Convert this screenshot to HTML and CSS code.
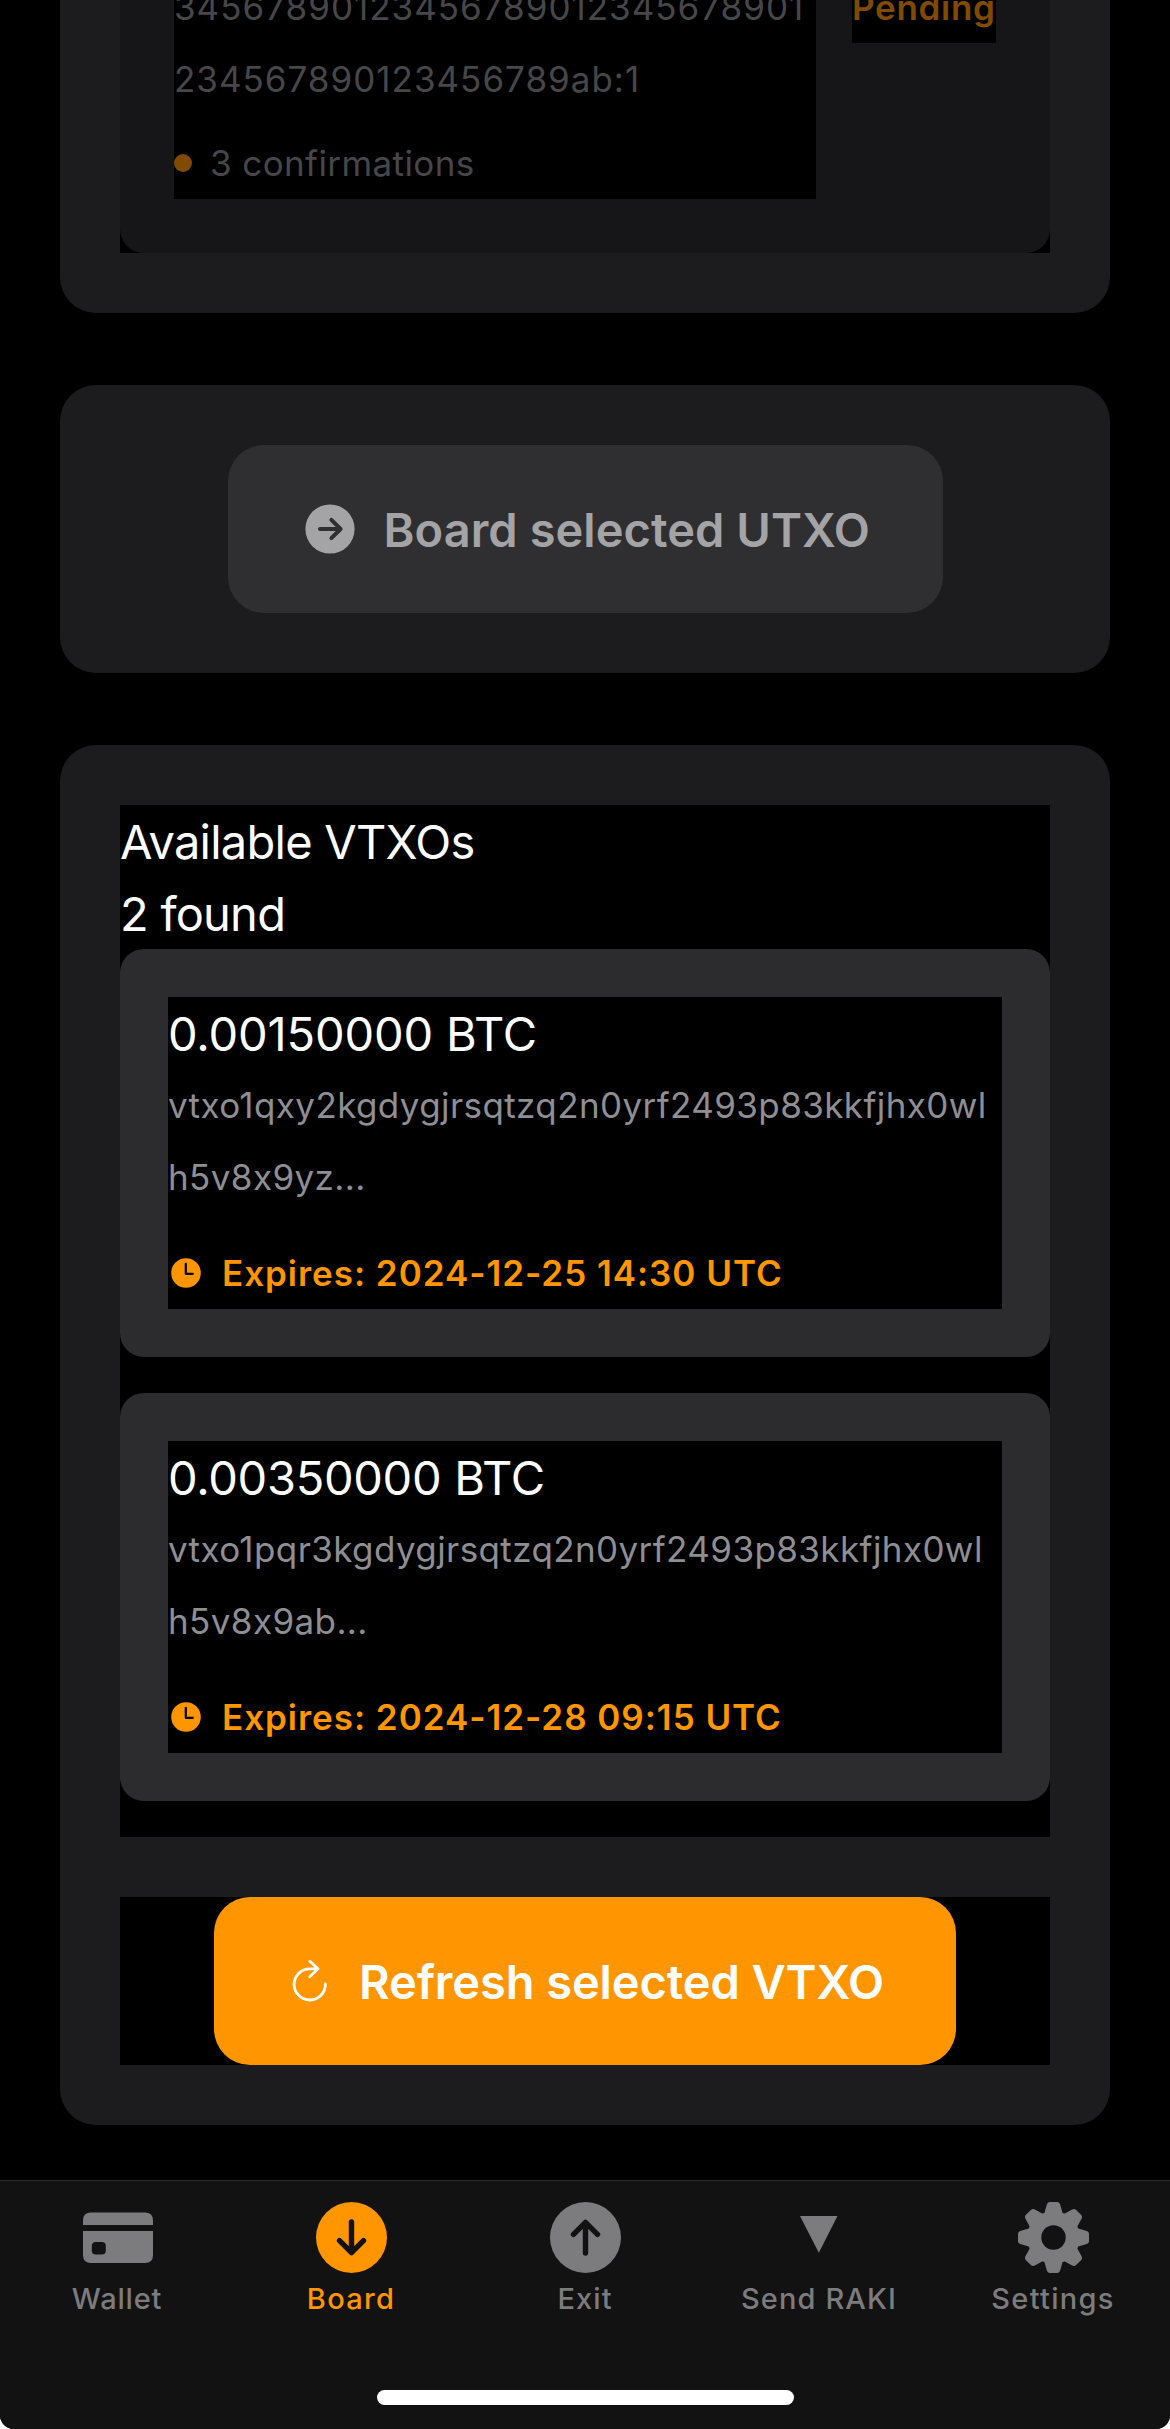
FILE: index.html
```html
<!DOCTYPE html>
<html lang="en">
<head>
<meta charset="utf-8">
<title>Board</title>
<link rel="stylesheet" href="styles.css">
</head>
<body>
<div class="app">
  <main class="content">
    <section class="card card-clipped">
      <div class="panel">
        <div class="utxo">
          <div class="utxo-info">
            <div class="hash digits">34567890123456789012345678901</div>
            <div class="hash digits">234567890123456789ab:1</div>
            <div class="confirm"><span class="dot"></span><span>3 confirmations</span></div>
          </div>
          <div class="status">Pending</div>
        </div>
      </div>
    </section>

    <section class="card card-action">
      <button class="button button-disabled">
        <svg class="button-icon" width="60" height="60" viewBox="0 0 60 60"><circle cx="30" cy="30" r="24.6" fill="#a4a4a6"/><path d="M20 30H40M31.4 20.8 40.6 30 31.4 39.2" fill="none" stroke="#2f2f31" stroke-width="4" stroke-linecap="round" stroke-linejoin="round"/></svg>
        <span class="button-label">Board selected UTXO</span>
      </button>
    </section>

    <section class="card card-vtxo">
      <div class="panel vtxo-list">
        <div class="heading">Available VTXOs</div>
        <div class="heading">2 found</div>
        <article class="vtxo">
          <div class="vtxo-body">
            <div class="amount">0.00150000 BTC</div>
            <div class="hash">vtxo1qxy2kgdygjrsqtzq2n0yrf2493p83kkfjhx0wl</div>
            <div class="hash">h5v8x9yz...</div>
            <div class="expires">
              <svg width="36" height="36" viewBox="0 0 36 36"><circle cx="18" cy="18" r="14.8" fill="#ff9500"/><path d="M17.8 8.8V18.8H24.8" fill="none" stroke="#000" stroke-width="2.2" stroke-linecap="round" stroke-linejoin="round"/></svg>
              <span>Expires: 2024-12-25 14:30 UTC</span>
            </div>
          </div>
        </article>
        <article class="vtxo">
          <div class="vtxo-body">
            <div class="amount amount-tight">0.00350000 BTC</div>
            <div class="hash">vtxo1pqr3kgdygjrsqtzq2n0yrf2493p83kkfjhx0wl</div>
            <div class="hash">h5v8x9ab...</div>
            <div class="expires">
              <svg width="36" height="36" viewBox="0 0 36 36"><circle cx="18" cy="18" r="14.8" fill="#ff9500"/><path d="M17.8 8.8V18.8H24.8" fill="none" stroke="#000" stroke-width="2.2" stroke-linecap="round" stroke-linejoin="round"/></svg>
              <span>Expires: 2024-12-28 09:15 UTC</span>
            </div>
          </div>
        </article>
      </div>
      <div class="panel refresh-row">
        <button class="button button-refresh">
          <svg class="button-icon" width="49" height="60" viewBox="0 0 49 60"><path d="M39.3 33A15.600 15.600 0 1 1 23.700 17.800H32M23.800 10.300 32 17.800 23.800 25.700" fill="none" stroke="#fff" stroke-width="2.800" stroke-linecap="round" stroke-linejoin="round"/></svg>
          <span class="button-label">Refresh selected VTXO</span>
        </button>
      </div>
    </section>
  </main>

  <nav class="tabbar">
    <div class="tabs">
      <a class="tab tab-wallet">
        <svg width="72" height="72" viewBox="0 0 72 72"><path d="M2 23V18.500Q2 10.500 10 10.500H64Q72 10.500 72 18.500V23ZM2 29H72V53Q72 61 64 61H10Q2 61 2 53Z" fill="#7c7c7e"/><rect x="10.800" y="40" width="14" height="12.500" rx="4" fill="#121212"/></svg>
        <span>Wallet</span>
      </a>
      <a class="tab tab-active">
        <svg width="72" height="72" viewBox="0 0 72 72"><circle cx="36.500" cy="35.500" r="35.500" fill="#ff9500"/><path d="M36.500 20V50.500M24.500 38.700 36.500 50.700 48.500 38.700" fill="none" stroke="#121212" stroke-width="5.400" stroke-linecap="round" stroke-linejoin="round"/></svg>
        <span>Board</span>
      </a>
      <a class="tab">
        <svg width="72" height="72" viewBox="0 0 72 72"><circle cx="36.500" cy="35.500" r="35.500" fill="#7c7c7e"/><path d="M36.500 51V20.500M24.500 32.300 36.500 20.300 48.500 32.300" fill="none" stroke="#121212" stroke-width="5.400" stroke-linecap="round" stroke-linejoin="round"/></svg>
        <span>Exit</span>
      </a>
      <a class="tab">
        <svg width="72" height="72" viewBox="0 0 72 72"><path d="M17 14H54.500L35.800 50.700Z" fill="#7c7c7e"/></svg>
        <span>Send RAKI</span>
      </a>
      <a class="tab tab-wide">
        <svg width="74" height="72" viewBox="-37 -36 74 72">
          <defs><path id="tooth" d="M-9.500 -23 -6.800 -32.500Q-6 -35.500 -3.500 -35.500H3.500Q6 -35.500 6.800 -32.500L9.500 -23Z"/></defs>
          <g transform="translate(.5 -.5)" fill="#7c7c7e">
            <circle r="26.300"/>
            <use href="#tooth"/><use href="#tooth" transform="rotate(45)"/><use href="#tooth" transform="rotate(90)"/><use href="#tooth" transform="rotate(135)"/><use href="#tooth" transform="rotate(180)"/><use href="#tooth" transform="rotate(225)"/><use href="#tooth" transform="rotate(270)"/><use href="#tooth" transform="rotate(315)"/>
            <circle r="12.200" fill="#121212"/>
          </g>
        </svg>
        <span>Settings</span>
      </a>
    </div>
    <div class="home-indicator"></div>
  </nav>
</div>
</body>
</html>
```
FILE: styles.css
```css
* { box-sizing: border-box; }

body {
  margin: 0;
  background: #fff;
  color: #fff;
  font-family: Inter, "Liberation Sans", sans-serif;
  font-feature-settings: "calt" 0;
  font-size: 47px;
  line-height: 72px;
}

svg { display: block; flex: none; }

.app {
  display: flex;
  flex-direction: column;
  height: 2429px;
  overflow: hidden;
  background: #000;
  border-radius: 0 0 14px 14px;
}

.content {
  display: flex;
  flex-direction: column;
  flex: none;
  gap: 72px;
  height: 2180px;
  padding: 0 60px;
  overflow: hidden;
}

.card {
  flex: none;
  padding: 60px;
  border-radius: 36px;
  background: #1c1c1e;
}

.card-clipped {
  height: 313px;
  padding-top: 0;
  border-radius: 0 0 36px 36px;
}

.panel { background: #000; }

/* UTXO row scrolled partly out of view */
.utxo {
  display: flex;
  align-items: flex-start;
  justify-content: space-between;
  height: 253px;
  padding: 0 54px 54px;
  overflow: hidden;
  border-radius: 0 0 24px 24px;
  background: #161618;
}

.utxo-info {
  width: 642px;
  height: 228px;
  margin-top: -29px;
  background: #000;
  color: #47474a;
}

.confirm {
  display: flex;
  align-items: center;
  gap: 18px;
  margin-top: 12px;
  font-size: 35px;
  letter-spacing: .4px;
}

.dot {
  width: 18px;
  height: 18px;
  border-radius: 50%;
  background: #804b00;
}

.status {
  width: 144px;
  height: 72px;
  margin-top: -29px;
  background: #000;
  color: #804b00;
  font-size: 35px;
  font-weight: 600;
  letter-spacing: .7px;
}

.hash {
  font-size: 35px;
  letter-spacing: .4px;
  white-space: nowrap;
}

.digits { letter-spacing: 1px; }

.card-action {
  display: flex;
  justify-content: center;
  height: 288px;
}

.button {
  display: flex;
  align-items: center;
  gap: 24px;
  height: 168px;
  padding: 0 72px;
  border: 0;
  border-radius: 36px;
  font: inherit;
  font-weight: 600;
  line-height: 72px;
  white-space: nowrap;
}

.button-label { padding-top: 2px; }

.button-disabled {
  width: 715px;
  background: #2f2f31;
  color: #a4a4a6;
  letter-spacing: .05px;
}

.button-refresh {
  width: 742px;
  background: #ff9500;
  color: #fff;
  letter-spacing: -.1px;
}

.vtxo-list { height: 1032px; }

.heading {
  height: 72px;
  padding-top: 1px;
  letter-spacing: -.75px;
}

.vtxo {
  height: 408px;
  margin-bottom: 36px;
  padding: 48px;
  border-radius: 24px;
  background: #2c2c2e;
}

.vtxo-body {
  height: 312px;
  background: #000;
}

.vtxo-body .hash { color: #8e8e93; }

.amount {
  height: 72px;
  padding-top: 1px;
  letter-spacing: -.15px;
}

.amount-tight { letter-spacing: -.3px; }

.expires {
  display: flex;
  align-items: center;
  gap: 18px;
  margin-top: 24px;
  color: #ff9500;
  font-size: 35px;
  font-weight: 600;
  letter-spacing: .97px;
}

.refresh-row {
  display: flex;
  justify-content: center;
  margin-top: 60px;
}

.tabbar {
  display: flex;
  flex-direction: column;
  align-items: center;
  justify-content: space-between;
  flex: 1;
  padding: 21px 0 24px;
  border-top: 1px solid #2b2b2d;
  background: #121212;
}

.tabs {
  display: grid;
  grid-template-columns: repeat(5, 1fr);
  width: 100%;
}

.tab {
  display: flex;
  flex-direction: column;
  align-items: center;
  gap: 7px;
  color: #7c7c7e;
  font-size: 29px;
  font-weight: 450;
  line-height: 36px;
  letter-spacing: 1.1px;
}

.tab-wallet { letter-spacing: .8px; }

.tab-wide { letter-spacing: 1.3px; }

.tab-active { color: #ff9500; letter-spacing: 1.3px; }

.home-indicator {
  width: 417px;
  height: 15px;
  border-radius: 8px;
  background: #fff;
}
```
